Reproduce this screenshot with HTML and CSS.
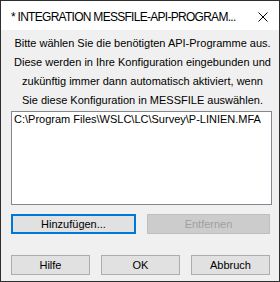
FILE: index.html
```html
<!DOCTYPE html>
<html>
<head>
<meta charset="utf-8">
<link rel="stylesheet" href="styles.css">
</head>
<body>
<div class="window">
  <div class="titlebar">
    <span class="title">* INTEGRATION MESSFILE-API-PROGRAM...</span>
    <svg class="close" width="10" height="10" viewBox="0 0 10 10"><path d="M0.5 0.5 L9.5 9.5 M9.5 0.5 L0.5 9.5" stroke="#000" stroke-width="1" fill="none"/></svg>
  </div>
  <div class="content">
    <div class="intro">
      <div>Bitte wählen Sie die benötigten API-Programme aus.</div>
      <div>Diese werden in Ihre Konfiguration eingebunden und</div>
      <div>zukünftig immer dann automatisch aktiviert, wenn</div>
      <div>Sie diese Konfiguration in MESSFILE auswählen.</div>
    </div>
    <div class="listbox">
      <div class="item">C:\Program Files\WSLC\LC\Survey\P-LINIEN.MFA</div>
    </div>
    <div class="row row-edit">
      <button class="btn btn-focus">Hinzufügen...</button>
      <button class="btn btn-disabled" disabled>Entfernen</button>
    </div>
    <div class="row row-bottom">
      <button class="btn btn-small">Hilfe</button>
      <button class="btn btn-small">OK</button>
      <button class="btn btn-small">Abbruch</button>
    </div>
  </div>
</div>
</body>
</html>
```
FILE: styles.css
```css
html, body {
  margin: 0;
  padding: 0;
  background: #ffffff;
}
.window {
  width: 280px;
  height: 282px;
  box-sizing: border-box;
  border: 1px solid #2e2e2e;
  display: flex;
  flex-direction: column;
  background: #f0f0f0;
}
.titlebar {
  height: 29px;
  background: #ffffff;
  display: flex;
  align-items: center;
  padding-left: 10px;
  padding-right: 11px;
  flex: none;
}
.title {
  font-family: "Liberation Sans", Arial, sans-serif;
  font-size: 12px;
  letter-spacing: -0.72px;
  color: #000;
  flex: 1;
  min-width: 0;
  overflow: hidden;
  white-space: nowrap;
  margin-top: 2px;
}
.close {
  display: block;
  flex: none;
  margin-top: 2px;
}
.content {
  flex: 1;
  display: flex;
  flex-direction: column;
  padding: 4px 7px 0 10px;
  font-family: "Liberation Sans", Arial, sans-serif;
  font-size: 11px;
  color: #000;
}
.intro {
  text-align: center;
  line-height: 19px;
  padding-left: 2px;
}
.listbox {
  height: 90px;
  border: 1px solid #828790;
  background: #ffffff;
  margin-top: 1px;
  padding: 1px 2px;
}
.item {
  line-height: 13px;
  white-space: nowrap;
}
.row {
  display: flex;
  gap: 11px;
}
.row-edit {
  margin-top: 9px;
  padding-right: 2px;
}
.row-bottom {
  margin-top: 21px;
  padding-right: 2px;
}
.btn {
  font-family: "Liberation Sans", Arial, sans-serif;
  font-size: 11px;
  color: #000;
  background: #e1e1e1;
  border: 1px solid #adadad;
  padding: 0;
  margin: 0;
  height: 20px;
  box-sizing: border-box;
}
.row-edit .btn {
  flex: 1;
}
.btn-focus {
  border: 2px solid #0078d7;
}
.btn-disabled {
  background: #cccccc;
  border-color: #bfbfbf;
  color: #a0a0a0;
}
.btn-small {
  flex: 1;
}
```
